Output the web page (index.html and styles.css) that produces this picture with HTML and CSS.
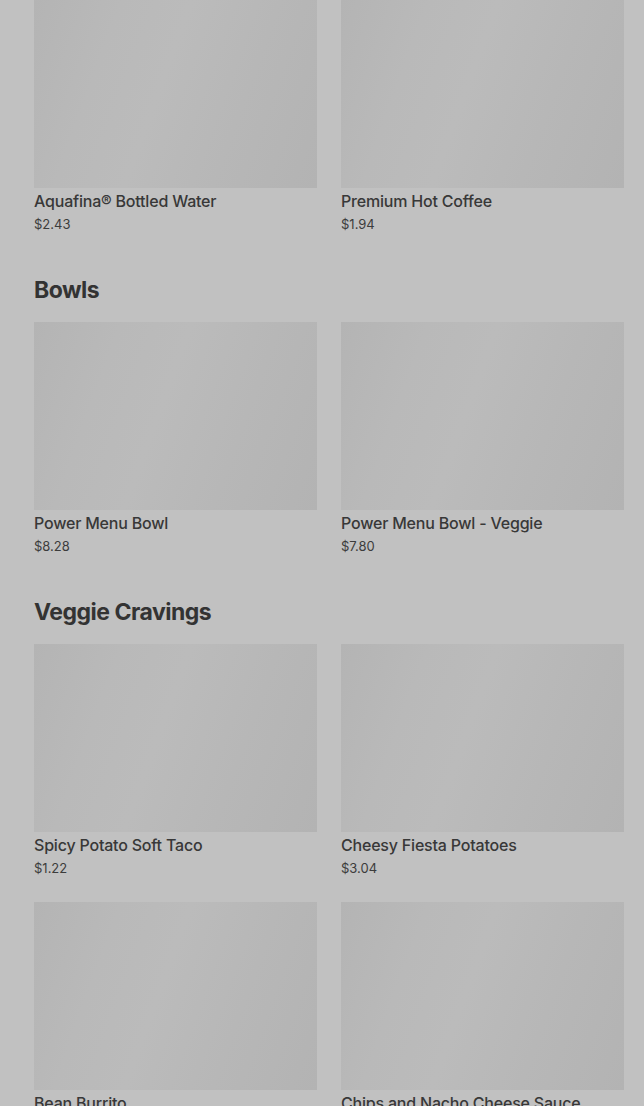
FILE: index.html
```html
<!DOCTYPE html>
<html lang="en">
<head>
    <meta charset="UTF-8">
    <meta name="viewport" content="width=device-width, initial-scale=1.0">
    <title>Menu</title>
    <link rel="stylesheet" href="styles.css">
</head>
<body>
    <div class="menu">
        <section class="section first">
            <div class="grid">
                <div class="card">
                    <div class="thumb"></div>
                    <div class="name">Aquafina® Bottled Water</div>
                    <div class="price">$2.43</div>
                </div>
                <div class="card">
                    <div class="thumb"></div>
                    <div class="name">Premium Hot Coffee</div>
                    <div class="price">$1.94</div>
                </div>
            </div>
        </section>

        <section class="section">
            <h2>Bowls</h2>
            <div class="grid">
                <div class="card">
                    <div class="thumb"></div>
                    <div class="name">Power Menu Bowl</div>
                    <div class="price">$8.28</div>
                </div>
                <div class="card">
                    <div class="thumb"></div>
                    <div class="name">Power Menu Bowl - Veggie</div>
                    <div class="price">$7.80</div>
                </div>
            </div>
        </section>

        <section class="section">
            <h2>Veggie Cravings</h2>
            <div class="grid">
                <div class="card">
                    <div class="thumb"></div>
                    <div class="name">Spicy Potato Soft Taco</div>
                    <div class="price">$1.22</div>
                </div>
                <div class="card">
                    <div class="thumb"></div>
                    <div class="name">Cheesy Fiesta Potatoes</div>
                    <div class="price">$3.04</div>
                </div>
                <div class="card">
                    <div class="thumb"></div>
                    <div class="name">Bean Burrito</div>
                    <div class="price">$1.55</div>
                </div>
                <div class="card">
                    <div class="thumb"></div>
                    <div class="name">Chips and Nacho Cheese Sauce</div>
                    <div class="price">$2.07</div>
                </div>
            </div>
        </section>
    </div>
</body>
</html>
```

FILE: styles.css
```css
html, body { margin: 0; padding: 0; }
body { background: #c1c1c1; font-family: Inter, "Liberation Sans", sans-serif; color: #363636; overflow: hidden; }
.menu { padding: 0 20px 0 34px; }
.section { margin-top: 40px; }
.section.first { margin-top: 0; }
.section h2 { margin: 0 0 16px; font-size: 23px; line-height: 32px; font-weight: 700; letter-spacing: -0.5px; color: #333; }
.grid { display: grid; grid-template-columns: 1fr 1fr; column-gap: 24px; row-gap: 24px; }
.card { display: flex; flex-direction: column; }
.thumb { height: 188px; background: linear-gradient(110deg, #b4b4b4 0%, #b9b9b9 25%, #bbbbbb 45%, #b7b7b7 70%, #b3b3b3 100%); }
.name { margin-top: 1px; font-size: 16px; line-height: 24px; font-weight: 500; letter-spacing: -0.2px; color: #383838; }
.price { padding-top: 1px; font-size: 13px; line-height: 20px; color: #3c3c3c; }
```
